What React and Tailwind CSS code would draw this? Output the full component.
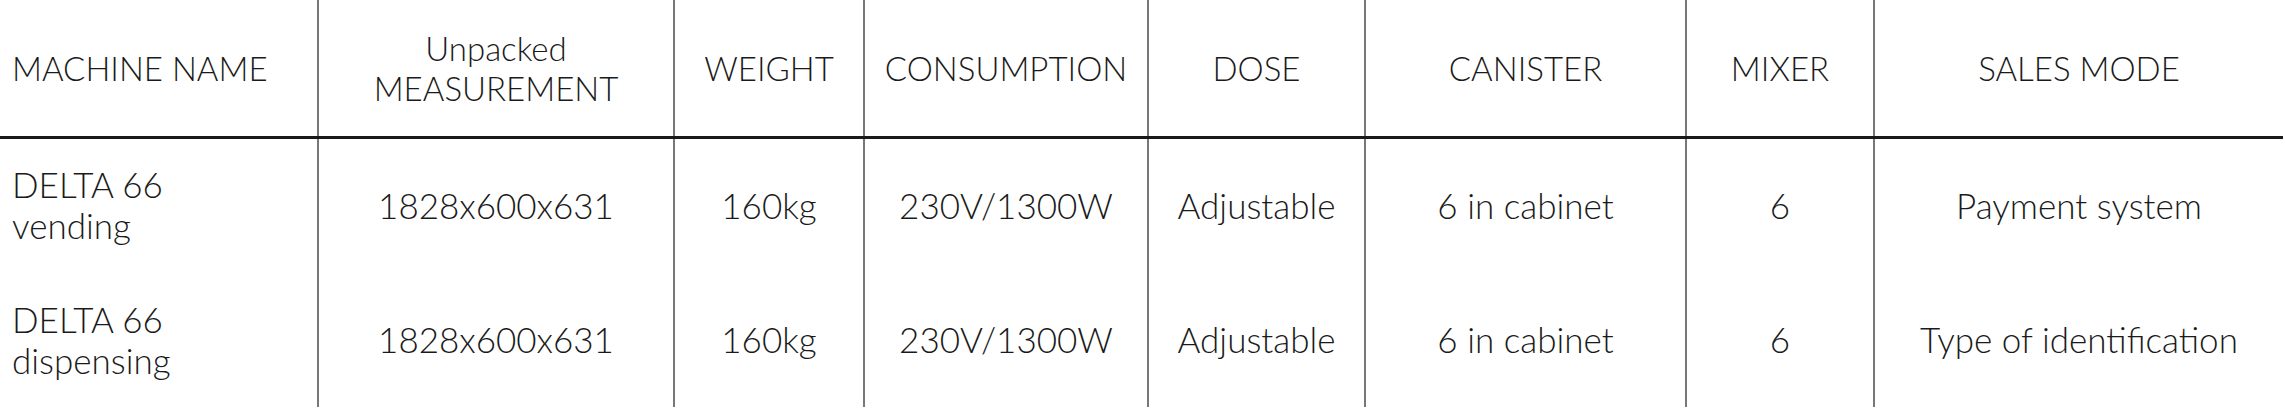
const columns = [
  { key: "name", label: "MACHINE NAME", width: "w-[318px]", align: "left" },
  { key: "size", label: ["Unpacked", "MEASUREMENT"], width: "w-[356px]" },
  { key: "weight", label: "WEIGHT", width: "w-[190px]" },
  { key: "power", label: "CONSUMPTION", width: "w-[284px]" },
  { key: "dose", label: "DOSE", width: "w-[217px]" },
  { key: "canister", label: "CANISTER", width: "w-[321px]" },
  { key: "mixer", label: "MIXER", width: "w-[188px]" },
  { key: "sales", label: "SALES MODE", width: "w-[409px]" },
];

const rows = [
  {
    name: ["DELTA 66", "vending"],
    size: "1828x600x631",
    weight: "160kg",
    power: "230V/1300W",
    dose: "Adjustable",
    canister: "6 in cabinet",
    mixer: "6",
    sales: "Payment system",
  },
  {
    name: ["DELTA 66", "dispensing"],
    size: "1828x600x631",
    weight: "160kg",
    power: "230V/1300W",
    dose: "Adjustable",
    canister: "6 in cabinet",
    mixer: "6",
    sales: "Type of identification",
  },
];

const Lines = ({ value }) =>
  Array.isArray(value) ? value.map((v) => <div key={v}>{v}</div>) : value;

export default function App() {
  return (
    <div className="w-[2285px] h-[408px] bg-white text-[#1a1a1a] font-['Lato','Noto_Sans',sans-serif] font-light overflow-hidden">
      <table className="w-[2283px] border-collapse table-fixed">
        <thead>
          <tr className="h-[137px] border-b-[3px] border-[#1a1a1a]">
            {columns.map((c, i) => (
              <th
                key={c.key}
                className={`${c.width} font-light text-[33px] leading-[40px] ${
                  c.align === "left" ? "text-left pl-3" : "text-center"
                } ${i < columns.length - 1 ? "border-r-2 border-r-[#777]" : ""}`}
              >
                <Lines value={c.label} />
              </th>
            ))}
          </tr>
        </thead>
        <tbody>
          {rows.map((r, ri) => (
            <tr key={ri} className="h-[135px]">
              {columns.map((c, i) => (
                <td
                  key={c.key}
                  className={`text-[35px] leading-[41px] ${
                    c.align === "left" ? "text-left pl-3" : "text-center"
                  } ${i < columns.length - 1 ? "border-r-2 border-r-[#777]" : ""}`}
                >
                  <Lines value={r[c.key]} />
                </td>
              ))}
            </tr>
          ))}
        </tbody>
      </table>
    </div>
  );
}
